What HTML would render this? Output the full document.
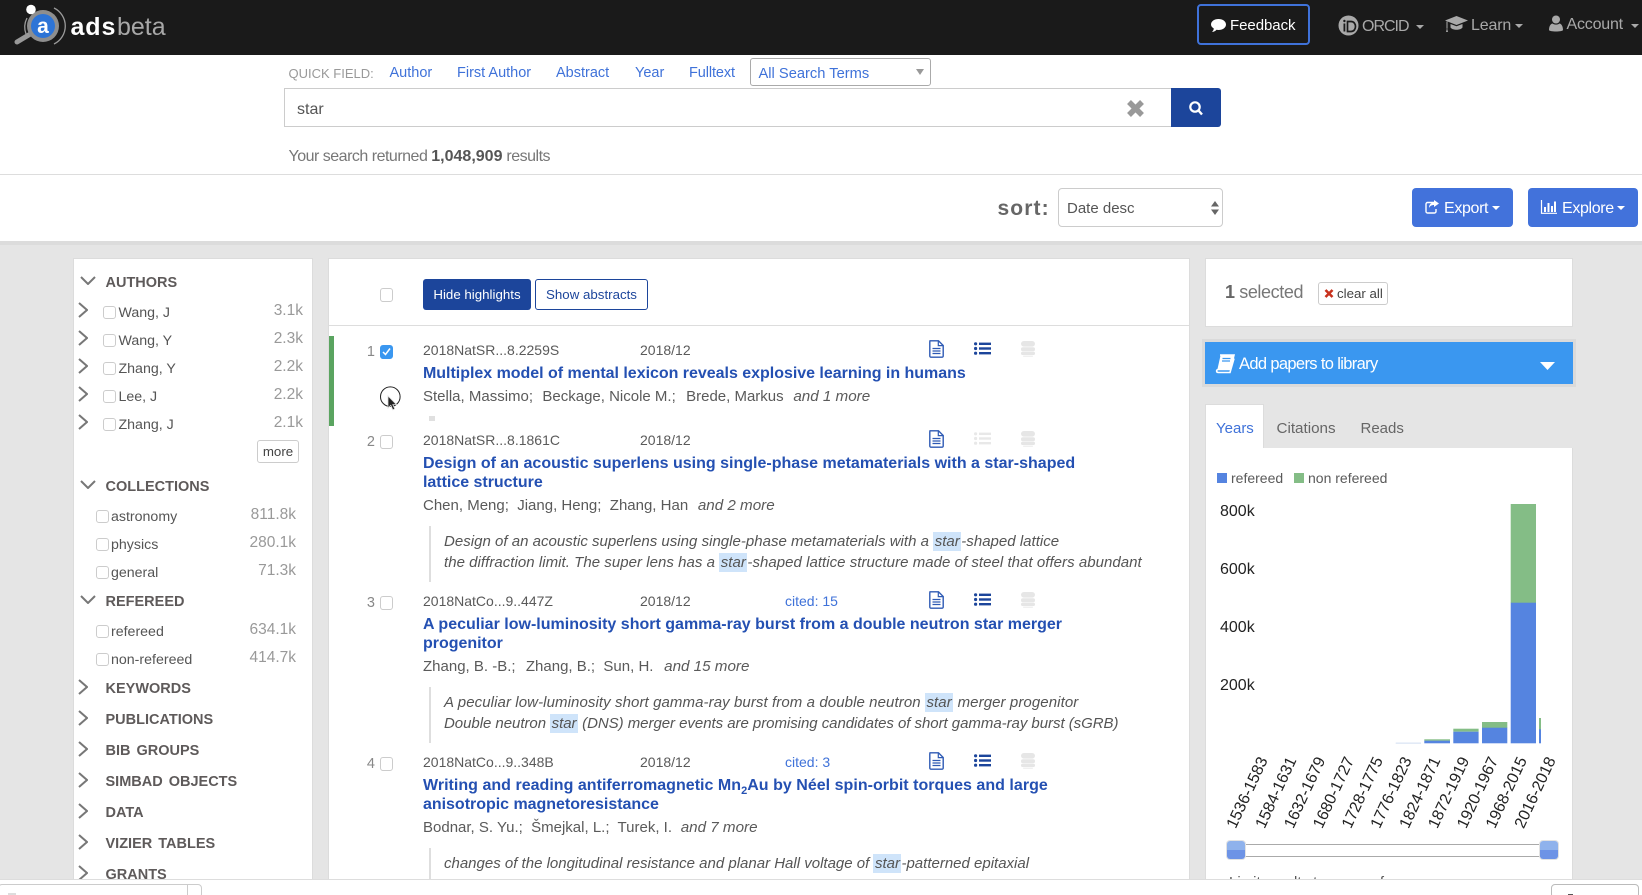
<!DOCTYPE html>
<html><head><meta charset="utf-8"><title>ADS</title>
<style>
html,body{margin:0;padding:0;width:1642px;height:895px;overflow:hidden;background:#e5e5e5;font-family:"Liberation Sans",Arial,sans-serif;color:#5a5a5a}
#w{position:relative;width:1642px;height:895px;overflow:hidden;background:#e5e5e5}
.a,.t,.h,.n,.c,.bc,.ti,.au,.ab{position:absolute}
.t,.h,.n,.c,.bc,.ti,.au,.ab{white-space:nowrap;line-height:20px}
.t,.h,.n,.ti,.au,.ab{margin-top:1px}
.box{position:absolute;background:#fff;box-sizing:border-box;border:1px solid #dcdcdc}
.h{left:105.500px;font-size:14.500px;font-weight:700;color:#5e5a5a;word-spacing:2px}
.n{font-size:14.200px;color:#555;margin-left:-.5px}
.c{font-size:15.500px;color:#999;text-align:right;width:70px}
.cb{position:absolute;box-sizing:border-box;width:12.500px;height:12.500px;border:1px solid #ccc;border-radius:3px;background:#fff;margin-left:-.5px}
.cm{position:absolute;box-sizing:border-box;left:379.500px;width:13.500px;height:14px;border:1px solid #ccc;border-radius:3px;background:#fff}
.bc{left:423px;font-size:14px;color:#5a5a5a}
.dt{position:absolute;left:640px;font-size:14px;color:#5a5a5a;line-height:20px}
.ct{position:absolute;left:785px;font-size:14px;color:#3f72d9;line-height:20px}
.ti{left:423px;font-size:16px;font-weight:700;color:#2450b2;letter-spacing:-.02px}
.au{left:423px;font-size:15px;color:#5a5a5a}
.au i{margin-left:5.500px;font-size:15.200px}
.ab{left:444px;font-size:15px;font-style:italic;color:#555}
.ab b{font-weight:400;background:#cfe4fa;padding:1px 1.500px}
.bq{position:absolute;left:429px;width:2px;background:#dedede}
.num{position:absolute;width:20px;left:355px;text-align:right;font-size:14.500px;color:#888;line-height:20px;margin-top:1px}
svg{position:absolute;overflow:visible}
.tn{color:#a9a9a9;font-size:16px;letter-spacing:-.3px}
.ql{color:#3f72d9;font-size:14.500px}
.g{margin-left:3px}
</style></head><body><div id="w">
<svg width="0" height="0" style="position:absolute">
<defs>
<symbol id="chr" viewBox="0 0 10 16"><polyline points="1,1 9,8 1,15" fill="none" stroke="#777" stroke-width="2"/></symbol>
<symbol id="chd" viewBox="0 0 16 9"><polyline points="1,1 8,8 15,1" fill="none" stroke="#777" stroke-width="2"/></symbol>
<symbol id="doc" viewBox="0 0 15 18"><path d="M1 .8h8.500l4.700 4.700V16a1.200 1.200 0 0 1-1.200 1.200H2A1.200 1.200 0 0 1 .8 16V1.800z" fill="none" stroke="#2e5ab4" stroke-width="1.400"/><path d="M9.300 1v4.600h4.700" fill="none" stroke="#2e5ab4" stroke-width="1.200"/><path d="M3.500 8.500h8M3.500 11h8M3.500 13.500h8" stroke="#2e5ab4" stroke-width="1.300"/></symbol>
<symbol id="lst" viewBox="0 0 17 13"><circle cx="1.600" cy="1.800" r="1.600"/><circle cx="1.600" cy="6.500" r="1.600"/><circle cx="1.600" cy="11.200" r="1.600"/><rect x="5" y=".6" width="12" height="2.400"/><rect x="5" y="5.300" width="12" height="2.400"/><rect x="5" y="10" width="12" height="2.400"/></symbol>
<symbol id="db" viewBox="0 0 14 16"><rect x="0" y="0" width="14" height="5.600" rx="2.800" fill="#e6e6e6"/><rect x="0" y="6.200" width="14" height="4" rx="1.800" fill="#e6e6e6"/><rect x="0" y="10.800" width="14" height="3.200" rx="1.500" fill="#e6e6e6"/><rect x="2" y="14.600" width="10" height="1.200" rx=".6" fill="#ececec"/></symbol>
</defs></svg>

<!-- header -->
<div class="a" style="left:0;top:0;width:1642px;height:55px;background:#1a1a1a"></div>
<svg style="left:0;top:0" width="180" height="55" viewBox="0 0 180 55">
<path d="M54 8A20 20 0 0 1 54 44" fill="none" stroke="#9a9a9a" stroke-width="1.300"/>
<path d="M27 18A20 20 0 0 0 26 34" fill="none" stroke="#9a9a9a" stroke-width="1.300"/>
<line x1="17" y1="42" x2="32" y2="33" stroke="#999" stroke-width="5" stroke-linecap="round"/>
<circle cx="43" cy="26" r="16" fill="#8e8e8e"/>
<circle cx="43" cy="26" r="12" fill="#2d74d6"/>
<circle cx="31" cy="9.500" r="4.800" fill="#fff"/>
<text x="43" y="33" font-family="Liberation Sans" font-size="21" font-weight="700" fill="#fff" text-anchor="middle">a</text>
<text x="70.500" y="35" font-family="Liberation Sans" font-size="25" font-weight="700" fill="#fff" letter-spacing=".9">ads</text>
<text x="117" y="35" font-family="Liberation Sans" font-size="25" fill="#a8a8a8">beta</text>
</svg>
<div class="a" style="left:1197px;top:4px;width:113px;height:41px;box-sizing:border-box;border:2px solid #3f72d9;border-radius:4px"></div>
<svg style="left:1211px;top:18px" width="15" height="15" viewBox="0 0 15 15"><path d="M7.500 1C11.600 1 15 3.300 15 6.500S11.600 12 7.500 12c-.8 0-1.500-.1-2-.2C4.500 13 3 14 1 14c1-1 1.700-2.200 1.800-3.500C1.100 9.500 0 8.100 0 6.500 0 3.300 3.400 1 7.500 1z" fill="#fff"/></svg>
<div class="t" style="left:1230px;top:15px;color:#fff;font-size:15px;letter-spacing:-.05px">Feedback</div>
<svg style="left:1338px;top:15px" width="21" height="21" viewBox="0 0 21 21"><circle cx="10.500" cy="10.500" r="10" fill="#a9a9a9"/><rect x="5.500" y="8.500" width="1.800" height="8" fill="#1a1a1a"/><circle cx="6.400" cy="6" r="1.200" fill="#1a1a1a"/><path d="M9.500 6.500h3.500c6 0 6 10 0 10H9.500z" fill="none" stroke="#1a1a1a" stroke-width="1.700"/></svg>
<div class="t tn" style="left:1362px;top:16px;letter-spacing:-1px">ORCID</div>
<svg style="left:1416px;top:25px" width="8" height="4"><path d="M0 0h8L4 4z" fill="#a9a9a9"/></svg>
<svg style="left:1445px;top:15px" width="23" height="18" viewBox="0 0 23 18"><path d="M11.500 1 23 5.500 11.500 10 0 5.500z" fill="#a9a9a9"/><path d="M5.500 9v3.500c2 3 10 3 12 0V9l-6 2.300z" fill="#a9a9a9"/><path d="M2 6.500v7" stroke="#a9a9a9" stroke-width="1"/><path d="M1 17l1-4 1 4z" fill="#a9a9a9"/></svg>
<div class="t tn" style="left:1471px;top:15px;letter-spacing:-.15px">Learn</div>
<svg style="left:1515px;top:24px" width="8" height="4"><path d="M0 0h8L4 4z" fill="#a9a9a9"/></svg>
<svg style="left:1549px;top:15px" width="14" height="17" viewBox="0 0 14 17"><circle cx="7" cy="4.500" r="4" fill="#a9a9a9"/><path d="M0 15c0-4 2-6.500 3.500-6.500 2 1.500 5 1.500 7 0C12 8.500 14 11 14 15c0 2-14 2-14 0z" fill="#a9a9a9"/></svg>
<div class="t tn" style="left:1566.500px;top:14px;letter-spacing:-.2px">Account</div>
<svg style="left:1631px;top:24px" width="8" height="4"><path d="M0 0h8L4 4z" fill="#a9a9a9"/></svg>

<!-- top search -->
<div class="a" style="left:0;top:55px;width:1642px;height:186px;background:#fff"></div>
<div class="t" style="left:288.500px;top:63px;color:#999;font-size:13px">QUICK FIELD:</div>
<div class="t ql" style="left:389.500px;top:62px">Author</div>
<div class="t ql" style="left:457px;top:62px">First Author</div>
<div class="t ql" style="left:556px;top:62px">Abstract</div>
<div class="t ql" style="left:635px;top:62px">Year</div>
<div class="t ql" style="left:689px;top:62px;letter-spacing:-.1px">Fulltext</div>
<div class="a" style="left:750px;top:58px;width:181px;height:28px;box-sizing:border-box;border:1px solid #aaa;border-radius:3px;background:#fff"></div>
<div class="t ql" style="left:758.500px;top:63px;font-size:14.700px">All Search Terms</div>
<svg style="left:916px;top:69px" width="8" height="6"><path d="M0 0h8L4 6z" fill="#999"/></svg>
<div class="a" style="left:284px;top:88px;width:888px;height:39px;box-sizing:border-box;border:1px solid #ccc"></div>
<div class="t" style="left:297px;top:99px;font-size:16px;color:#555">star</div>
<svg style="left:1126px;top:100px" width="19" height="17"><path d="M3 2l13 13M16 2L3 15" stroke="#999" stroke-width="5.500"/></svg>
<div class="a" style="left:1171px;top:88px;width:50px;height:39px;background:#1c459b;border-radius:0 3px 3px 0"></div>
<svg style="left:1188px;top:100px" width="16" height="16"><circle cx="7" cy="7" r="4.700" fill="none" stroke="#fff" stroke-width="2.200"/><path d="M10.500 10.500l3.500 4" stroke="#fff" stroke-width="2.400"/></svg>
<div class="t" style="left:288.500px;top:146px;font-size:16px;color:#777;letter-spacing:-.5px">Your search returned <b style="color:#555;letter-spacing:0">1,048,909</b> results</div>
<div class="a" style="left:0;top:174px;width:1642px;height:1px;background:#ddd"></div>
<div class="t" style="left:997.500px;top:198px;font-size:21px;font-weight:700;color:#666;letter-spacing:1.100px">sort:</div>
<div class="a" style="left:1058px;top:188px;width:165px;height:39px;box-sizing:border-box;border:1px solid #ccc;border-radius:4px"></div>
<div class="t" style="left:1067px;top:198px;font-size:15px;color:#555">Date desc</div>
<svg style="left:1211px;top:201px" width="8" height="14"><path d="M0 5.500h8L4 0zM0 8.500h8L4 14z" fill="#666"/></svg>
<div class="a" style="left:1412px;top:188px;width:101px;height:39px;background:#4272db;border-radius:4px"></div>
<svg style="left:1425px;top:200px" width="15" height="14" viewBox="0 0 15 14"><path d="M10 2.500H2.500a1.500 1.500 0 0 0-1.500 1.500v7.500A1.500 1.500 0 0 0 2.500 13h7a1.500 1.500 0 0 0 1.500-1.500V9" fill="none" stroke="#fff" stroke-width="1.400"/><path d="M9 0l5 3.500L9 7V5C6.500 5 5 6 4 8c0-3.500 2-5.500 5-5.500z" fill="#fff"/></svg>
<div class="t tn" style="left:1444px;top:198px;color:#fff;letter-spacing:-.35px">Export</div>
<svg style="left:1492px;top:206px" width="8" height="4"><path d="M0 0h8L4 4z" fill="#fff"/></svg>
<div class="a" style="left:1528px;top:188px;width:110px;height:39px;background:#4272db;border-radius:4px"></div>
<svg style="left:1541px;top:200px" width="16" height="14" viewBox="0 0 16 14"><path d="M.5 0v13.300H16" fill="none" stroke="#fff" stroke-width="1.200"/><path d="M3 7h2v5H3zM6.500 3h2v9h-2zM10 6h2v6h-2zM13 1.500h2V12h-2z" fill="#fff"/></svg>
<div class="t tn" style="left:1562px;top:198px;color:#fff;letter-spacing:-.35px">Explore</div>
<svg style="left:1617px;top:206px" width="8" height="4"><path d="M0 0h8L4 4z" fill="#fff"/></svg>
<div class="a" style="left:0;top:241px;width:1642px;height:4px;background:#dcdcdc"></div>

<!-- left panel -->
<div class="box" style="left:73px;top:258px;width:240px;height:640px"></div>
<svg style="left:80px;top:276px" width="16" height="9"><use href="#chd"/></svg>
<div class="h" style="top:272px">AUTHORS</div>
<svg style="left:78px;top:302px" width="10" height="16"><use href="#chr"/></svg><div class="cb" style="left:103.500px;top:306px"></div><div class="n" style="left:119px;top:302px">Wang, J</div><div class="c" style="left:233px;top:301px">3.1k</div>
<svg style="left:78px;top:330px" width="10" height="16"><use href="#chr"/></svg><div class="cb" style="left:103.500px;top:334px"></div><div class="n" style="left:119px;top:330px">Wang, Y</div><div class="c" style="left:233px;top:329px">2.3k</div>
<svg style="left:78px;top:358px" width="10" height="16"><use href="#chr"/></svg><div class="cb" style="left:103.500px;top:362px"></div><div class="n" style="left:119px;top:358px">Zhang, Y</div><div class="c" style="left:233px;top:357px">2.2k</div>
<svg style="left:78px;top:386px" width="10" height="16"><use href="#chr"/></svg><div class="cb" style="left:103.500px;top:390px"></div><div class="n" style="left:119px;top:386px">Lee, J</div><div class="c" style="left:233px;top:385px">2.2k</div>
<svg style="left:78px;top:414px" width="10" height="16"><use href="#chr"/></svg><div class="cb" style="left:103.500px;top:418px"></div><div class="n" style="left:119px;top:414px">Zhang, J</div><div class="c" style="left:233px;top:413px">2.1k</div>
<div class="a" style="left:257px;top:440px;width:42px;height:23px;box-sizing:border-box;border:1px solid #ccc;border-radius:3px;font-size:13.300px;line-height:21px;text-align:center;color:#444">more</div>
<svg style="left:80px;top:480px" width="16" height="9"><use href="#chd"/></svg>
<div class="h" style="top:476px">COLLECTIONS</div>
<div class="cb" style="left:96.500px;top:510px"></div><div class="n" style="left:111.500px;top:506px">astronomy</div><div class="c" style="left:226px;top:505px">811.8k</div>
<div class="cb" style="left:96.500px;top:538px"></div><div class="n" style="left:111.500px;top:534px">physics</div><div class="c" style="left:226px;top:533px">280.1k</div>
<div class="cb" style="left:96.500px;top:566px"></div><div class="n" style="left:111.500px;top:562px">general</div><div class="c" style="left:226px;top:561px">71.3k</div>
<svg style="left:80px;top:595px" width="16" height="9"><use href="#chd"/></svg>
<div class="h" style="top:591px">REFEREED</div>
<div class="cb" style="left:96.500px;top:625px"></div><div class="n" style="left:111.500px;top:621px">refereed</div><div class="c" style="left:226px;top:620px">634.1k</div>
<div class="cb" style="left:96.500px;top:653px"></div><div class="n" style="left:111.500px;top:649px">non-refereed</div><div class="c" style="left:226px;top:648px">414.7k</div>
<svg style="left:78px;top:679px" width="10" height="16"><use href="#chr"/></svg><div class="h" style="top:678px">KEYWORDS</div>
<svg style="left:78px;top:710px" width="10" height="16"><use href="#chr"/></svg><div class="h" style="top:709px">PUBLICATIONS</div>
<svg style="left:78px;top:741px" width="10" height="16"><use href="#chr"/></svg><div class="h" style="top:740px">BIB GROUPS</div>
<svg style="left:78px;top:772px" width="10" height="16"><use href="#chr"/></svg><div class="h" style="top:771px">SIMBAD OBJECTS</div>
<svg style="left:78px;top:803px" width="10" height="16"><use href="#chr"/></svg><div class="h" style="top:802px">DATA</div>
<svg style="left:78px;top:834px" width="10" height="16"><use href="#chr"/></svg><div class="h" style="top:833px">VIZIER TABLES</div>
<svg style="left:78px;top:865px" width="10" height="16"><use href="#chr"/></svg><div class="h" style="top:864px">GRANTS</div>

<!-- center panel -->
<div class="box" style="left:328px;top:258px;width:862px;height:640px"></div>
<div class="a" style="left:329px;top:325px;width:860px;height:1px;background:#ddd"></div>
<div class="cm" style="top:288px"></div>
<div class="a" style="left:423px;top:279px;width:108px;height:31px;background:#1c459b;border-radius:3px;color:#fff;font-size:13.300px;line-height:31px;text-align:center">Hide highlights</div>
<div class="a" style="left:535px;top:279px;width:113px;height:31px;box-sizing:border-box;border:1px solid #1c459b;border-radius:3px;color:#1c459b;font-size:13.300px;line-height:29px;text-align:center">Show abstracts</div>
<div class="a" style="left:329px;top:336px;width:5px;height:90px;background:#5aa460"></div>

<div class="num" style="top:341px">1</div>
<div class="cm" style="top:344.500px;background:#3a97f0;border-color:#3a97f0"></div>
<svg style="left:382px;top:347px" width="9" height="9"><path d="M1 5l2.500 2.500L8 1.500" fill="none" stroke="#fff" stroke-width="1.500"/></svg>
<div class="bc" style="top:340px">2018NatSR...8.2259S</div><div class="dt" style="top:340px">2018/12</div>
<svg style="left:929px;top:340px" width="15" height="18"><use href="#doc"/></svg>
<svg style="left:974px;top:342px;fill:#1c459b" width="17" height="13"><use href="#lst"/></svg>
<svg style="left:1021px;top:341px" width="14" height="16"><use href="#db"/></svg>
<div class="ti" style="top:363px">Multiplex model of mental lexicon reveals explosive learning in humans</div>
<div class="au" style="top:386px">Stella, Massimo;&nbsp; <span class="g" style="margin-left:1px"></span>Beckage, Nicole M.;&nbsp; <span class="g" style="margin-left:2px"></span>Brede, Markus <i>and 1 more</i></div>
<div class="a" style="left:429px;top:416px;width:6px;height:5px;background:#e0e0e0"></div>
<svg style="left:379px;top:385px" width="26" height="30"><circle cx="11.300" cy="11.700" r="9.800" fill="none" stroke="#222" stroke-width="1"/><path d="M9 11v12l2.800-2.700 2 4.500 2-1-2-4.200h3.700z" fill="#222" stroke="#ddd" stroke-width=".8"/></svg>

<div class="num" style="top:431px">2</div>
<div class="cm" style="top:434.500px"></div>
<div class="bc" style="top:430px">2018NatSR...8.1861C</div><div class="dt" style="top:430px">2018/12</div>
<svg style="left:929px;top:430px" width="15" height="18"><use href="#doc"/></svg>
<svg style="left:974px;top:432px;fill:#e8e8e8" width="17" height="13"><use href="#lst"/></svg>
<svg style="left:1021px;top:431px" width="14" height="16"><use href="#db"/></svg>
<div class="ti" style="top:453px;letter-spacing:.005px">Design of an acoustic superlens using single-phase metamaterials with a star-shaped</div>
<div class="ti" style="top:472px">lattice structure</div>
<div class="au" style="top:495px">Chen, Meng;&nbsp; Jiang, Heng;&nbsp; Zhang, Han <i>and 2 more</i></div>
<div class="bq" style="top:526px;height:56px"></div>
<div class="ab" style="top:531px;letter-spacing:.02px">Design of an acoustic superlens using single-phase metamaterials with a <b>star</b>-shaped lattice</div>
<div class="ab" style="top:552px;letter-spacing:.04px">the diffraction limit. The super lens has a <b>star</b>-shaped lattice structure made of steel that offers abundant</div>

<div class="num" style="top:592px">3</div>
<div class="cm" style="top:595.500px"></div>
<div class="bc" style="top:591px">2018NatCo...9..447Z</div><div class="dt" style="top:591px">2018/12</div><div class="ct" style="top:591px">cited: 15</div>
<svg style="left:929px;top:591px" width="15" height="18"><use href="#doc"/></svg>
<svg style="left:974px;top:593px;fill:#1c459b" width="17" height="13"><use href="#lst"/></svg>
<svg style="left:1021px;top:592px" width="14" height="16"><use href="#db"/></svg>
<div class="ti" style="top:614px;letter-spacing:.005px">A peculiar low-luminosity short gamma-ray burst from a double neutron star merger</div>
<div class="ti" style="top:633px">progenitor</div>
<div class="au" style="top:656px">Zhang, B. -B.;&nbsp; <span class="g" style="margin-left:2px"></span>Zhang, B.;&nbsp; Sun, H. <i style="margin-left:6.500px">and 15 more</i></div>
<div class="bq" style="top:687px;height:56px"></div>
<div class="ab" style="top:692px;letter-spacing:.09px">A peculiar low-luminosity short gamma-ray burst from a double neutron <b>star</b> merger progenitor</div>
<div class="ab" style="top:713px;letter-spacing:-.04px">Double neutron <b>star</b> (DNS) merger events are promising candidates of short gamma-ray burst (sGRB)</div>

<div class="num" style="top:753px">4</div>
<div class="cm" style="top:756.500px"></div>
<div class="bc" style="top:752px">2018NatCo...9..348B</div><div class="dt" style="top:752px">2018/12</div><div class="ct" style="top:752px">cited: 3</div>
<svg style="left:929px;top:752px" width="15" height="18"><use href="#doc"/></svg>
<svg style="left:974px;top:754px;fill:#1c459b" width="17" height="13"><use href="#lst"/></svg>
<svg style="left:1021px;top:753px" width="14" height="16"><use href="#db"/></svg>
<div class="ti" style="top:775px;letter-spacing:.025px">Writing and reading antiferromagnetic Mn<sub style="font-size:11px;line-height:0">2</sub>Au by Néel spin-orbit torques and large</div>
<div class="ti" style="top:794px">anisotropic magnetoresistance</div>
<div class="au" style="top:817px">Bodnar, S. Yu.;&nbsp; Šmejkal, L.;&nbsp; Turek, I. <i style="margin-left:4.500px">and 7 more</i></div>
<div class="bq" style="top:848px;height:47px"></div>
<div class="ab" style="top:853px">changes of the longitudinal resistance and planar Hall voltage of <b>star</b>-patterned epitaxial</div>

<!-- right panel -->
<div class="box" style="left:1205px;top:258px;width:368px;height:69px"></div>
<div class="t" style="left:1225px;top:281px;font-size:18px;color:#777;letter-spacing:-.4px"><b style="color:#666">1</b> selected</div>
<div class="a" style="left:1318px;top:282px;width:70px;height:23px;box-sizing:border-box;border:1px solid #ccc;border-radius:3px"></div>
<svg style="left:1324px;top:288px" width="10" height="11"><path d="M1.500 2l7 7M8.500 2l-7 7" stroke="#c8321e" stroke-width="2.600"/></svg>
<div class="t" style="left:1337px;top:283px;font-size:13.300px;color:#444">clear all</div>
<div class="a" style="left:1205px;top:342px;width:368px;height:42px;background:#3a97f0;box-shadow:0 0 0 3px #dadada"></div>
<svg style="left:1215px;top:354px" width="20" height="19" viewBox="0 0 20 19"><path d="M5 1h14l-3.500 14.500H3.500c-2.500 0-2.500 3 0 3H15l4-14" fill="none" stroke="#fff" stroke-width="1.600"/><path d="M5.500 1.500h13L15.300 15H2.500z" fill="#fff"/><path d="M7.500 4.500h8M7 7h8" stroke="#3a97f0" stroke-width="1.300"/></svg>
<div class="t" style="left:1239px;top:353px;font-size:16.500px;color:#fff;letter-spacing:-.65px">Add papers to library</div>
<svg style="left:1539.500px;top:362px" width="15" height="8"><path d="M0 0h15L7.500 8z" fill="#fff"/></svg>

<div class="a" style="left:1205px;top:404px;width:59px;height:46px;background:#fff;border:1px solid #dcdcdc;border-bottom:0;box-sizing:border-box"></div>
<div class="box" style="left:1205px;top:448px;width:368px;height:450px;border-top:0"></div>
<div class="a" style="left:1206px;top:440px;width:57px;height:10px;background:#fff"></div>
<div class="t" style="left:1216px;top:418px;font-size:15px;color:#3f72d9">Years</div>
<div class="t" style="left:1276.500px;top:418px;font-size:15.200px;color:#666">Citations</div>
<div class="t" style="left:1360.500px;top:418px;font-size:15px;color:#666">Reads</div>
<div class="a" style="left:1217px;top:473px;width:10px;height:10px;background:#5584e0"></div>
<div class="t" style="left:1231px;top:467px;font-size:14px;color:#5a5a5a">refereed</div>
<div class="a" style="left:1294px;top:473px;width:10px;height:10px;background:#84bd86"></div>
<div class="t" style="left:1308px;top:467px;font-size:14px;color:#5a5a5a">non refereed</div>
<div class="t" style="left:1220px;top:501px;font-size:16px;color:#222">800k</div>
<div class="t" style="left:1220px;top:559px;font-size:16px;color:#222">600k</div>
<div class="t" style="left:1220px;top:617px;font-size:16px;color:#222">400k</div>
<div class="t" style="left:1220px;top:675px;font-size:16px;color:#222">200k</div>
<svg style="left:0;top:0" width="1642" height="895">
<g fill="#84bd86"><rect x="1510.700" y="504" width="25.300" height="99"/><rect x="1482" y="722" width="25.300" height="6"/><rect x="1453.300" y="728.700" width="25.300" height="3"/><rect x="1424.300" y="739.300" width="25.700" height="1.500"/><rect x="1539" y="718" width="2" height="11.500"/></g>
<g fill="#5584e0"><rect x="1510.700" y="602.700" width="25.300" height="140.600"/><rect x="1482" y="727.700" width="25.300" height="15.600"/><rect x="1453.300" y="731.700" width="25.300" height="11.600"/><rect x="1424.300" y="740.700" width="25.700" height="2.600"/><rect x="1539" y="729.300" width="2" height="14"/></g>
<rect x="1395.700" y="742.700" width="25.300" height=".8" fill="#c4d4ee"/>
<g font-family="Liberation Sans" font-size="16" fill="#222" text-anchor="end">
<text transform="translate(1268,760) rotate(-65)">1536-1583</text>
<text transform="translate(1296.800,760) rotate(-65)">1584-1631</text>
<text transform="translate(1325.600,760) rotate(-65)">1632-1679</text>
<text transform="translate(1354.400,760) rotate(-65)">1680-1727</text>
<text transform="translate(1383.200,760) rotate(-65)">1728-1775</text>
<text transform="translate(1412,760) rotate(-65)">1776-1823</text>
<text transform="translate(1440.800,760) rotate(-65)">1824-1871</text>
<text transform="translate(1469.600,760) rotate(-65)">1872-1919</text>
<text transform="translate(1498.400,760) rotate(-65)">1920-1967</text>
<text transform="translate(1527.200,760) rotate(-65)">1968-2015</text>
<text transform="translate(1556,760) rotate(-65)">2016-2018</text>
</g>
</svg>
<div class="a" style="left:1240px;top:844px;width:305px;height:13px;box-sizing:border-box;border-top:1px solid #aaa;border-bottom:1px solid #aaa;background:#fff"></div>
<div class="a" style="left:1226.500px;top:840.500px;width:18px;height:18px;border-radius:3px;background:linear-gradient(#8fb2ec 50%,#6d93e6 50%);box-shadow:0 0 0 1px #e2e2e2"></div>
<div class="a" style="left:1539.500px;top:840.500px;width:18px;height:18px;border-radius:3px;background:linear-gradient(#8fb2ec 50%,#6d93e6 50%);box-shadow:0 0 0 1px #e2e2e2"></div>
<div class="t" style="left:1229px;top:872px;font-size:15px;color:#555">Limit results to papers from</div>

<!-- footer -->
<div class="a" style="left:0;top:879px;width:1642px;height:16px;background:#fff;border-top:1px solid #ddd;box-sizing:border-box"></div>
<div class="a" style="left:-2px;top:884px;width:204px;height:14px;box-sizing:border-box;border:1px solid #ccc;border-radius:4px;background:#fff"></div>
<div class="a" style="left:187px;top:885px;width:1px;height:10px;background:#ccc"></div>
<div class="a" style="left:8px;top:893px;width:8px;height:2px;background:#ddd"></div>
<div class="a" style="left:1550.500px;top:884px;width:88px;height:14px;box-sizing:border-box;border:1px solid #bbb;border-radius:4px;background:#fff"></div>
<div class="a" style="left:1568px;top:893.500px;width:5px;height:1.500px;background:#555"></div>
</div></body></html>
